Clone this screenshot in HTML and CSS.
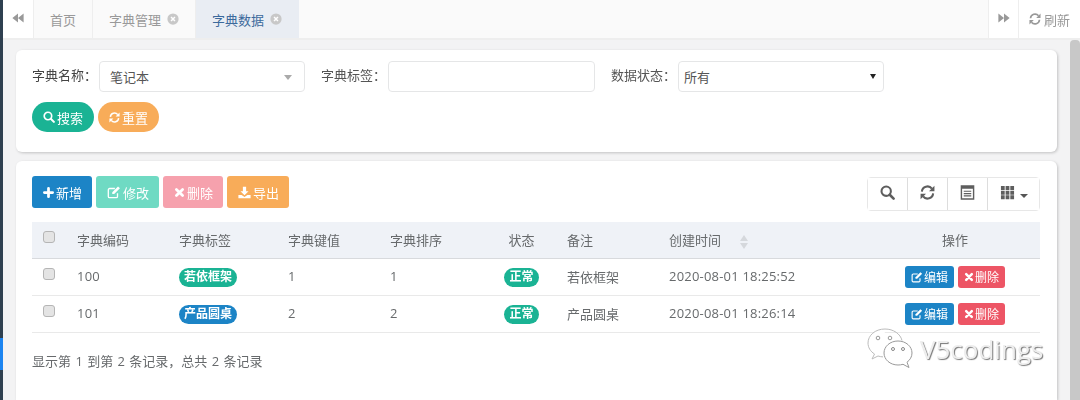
FILE: index.html
```html
<!DOCTYPE html>
<html lang="zh-CN">
  <head>
    <meta charset="UTF-8" />
    <title>字典数据</title>
    <link rel="stylesheet" href="styles.css">
  </head>
  <body>
    <svg class="sprite" width="0" height="0">
      <symbol id="i-search" viewBox="0 0 16 16">
        <circle cx="6.6" cy="6.600" r="5" fill="none" stroke="currentColor" stroke-width="2.2" />
        <path d="M10.400 10.400l4.100 4.100" fill="none" stroke="currentColor" stroke-width="2.8" stroke-linecap="round" />
      </symbol>
      <symbol id="i-refresh" viewBox="0 0 16 16">
        <path d="M2 7A6 6 0 0 1 12.700 3.800M14 9A6 6 0 0 1 3.300 12.200" fill="none" stroke="currentColor" stroke-width="2.2" />
        <path d="M15.400 .8V6.600H9.600zM.6 15.200V9.400H6.400z" fill="currentColor" />
      </symbol>
      <symbol id="i-edit" viewBox="0 0 16 16">
        <path d="M12 9.500V13a1.500 1.500 0 0 1-1.500 1.500H3A1.500 1.500 0 0 1 1.500 13V5.500A1.500 1.500 0 0 1 3 4h6" fill="none" stroke="currentColor" stroke-width="1.5" />
        <path d="M6 8.200L12.600 1.600l2.200 2.200L8.200 10.400H6z" fill="currentColor" />
      </symbol>
      <symbol id="i-times" viewBox="0 0 16 16">
        <path d="M3.500 3.500l9 9M12.500 3.500l-9 9" fill="none" stroke="currentColor" stroke-width="4" stroke-linecap="round" />
      </symbol>
      <symbol id="i-plus" viewBox="0 0 16 16">
        <path d="M8 2v12M2 8h12" fill="none" stroke="currentColor" stroke-width="4" stroke-linecap="round" />
      </symbol>
      <symbol id="i-download" viewBox="0 0 16 16">
        <path d="M6 1h4v5.500h3L8 11.500 3 6.500h3zM.5 11h3.900L8 13.400 11.600 11h3.900v4H.5z" fill="currentColor" />
      </symbol>
      <symbol id="i-back" viewBox="0 0 16 16">
        <path d="M8 2v12L.5 8zM15.500 2v12L8 8z" fill="currentColor" />
      </symbol>
      <symbol id="i-forward" viewBox="0 0 16 16">
        <path d="M.5 2v12L8 8zM8 2v12L15.500 8z" fill="currentColor" />
      </symbol>
      <symbol id="i-close" viewBox="0 0 16 16">
        <circle cx="8" cy="8" r="7.500" fill="currentColor" />
        <path d="M5.400 5.400l5.200 5.200M10.600 5.400l-5.200 5.200" fill="none" stroke="#fff" stroke-width="2" />
      </symbol>
      <symbol id="i-list" viewBox="0 0 16 16">
        <path d="M1.500 1h13v14h-13z" fill="none" stroke="currentColor" stroke-width="1.500" />
        <path d="M1.500 1h13v3h-13zM4 6h8v1.300H4zM4 8.500h8v1.300H4zM4 11h8v1.300H4z" fill="currentColor" />
      </symbol>
      <symbol id="i-th" viewBox="0 0 16 16">
        <path d="M1 1h4v4.300H1zM6 1h4v4.300H6zM11 1h4v4.300h-4zM1 6h4v4.300H1zM6 6h4v4.300H6zM11 6h4v4.300h-4zM1 11h4v4.300H1zM6 11h4v4.300H6zM11 11h4v4.300h-4z" fill="currentColor" />
      </symbol>
    </svg>

    <div class="app">
      <aside class="sidebar"><span class="sidebar-mark"></span></aside>

      <div class="main">
        <nav class="tabs">
          <button class="tab-arrow"><svg class="ico"><use href="#i-back" /></svg></button>
          <a class="tab tab-home">首页</a>
          <a class="tab">字典管理 <svg class="ico-close"><use href="#i-close" /></svg></a>
          <a class="tab active">字典数据 <svg class="ico-close"><use href="#i-close" /></svg></a>
          <span class="tabs-space"></span>
          <button class="tab-arrow"><svg class="ico"><use href="#i-forward" /></svg></button>
          <a class="tab-refresh"><svg class="ico-12"><use href="#i-refresh" /></svg>刷新</a>
        </nav>

        <div class="content">
          <section class="card search-card">
            <div class="search-row">
              <label>字典名称：</label>
              <div class="field field-select2">笔记本<span class="caret caret-light"></span></div>
              <label class="label-next">字典标签：</label>
              <input class="field field-input" type="text">
              <label class="label-next">数据状态：</label>
              <div class="field field-native">所有<span class="caret caret-dark"></span></div>
            </div>
            <div class="search-actions">
              <a class="btn btn-round green"><svg class="ico-12"><use href="#i-search" /></svg>搜索</a>
              <a class="btn btn-round orange"><svg class="ico-11"><use href="#i-refresh" /></svg>重置</a>
            </div>
          </section>

          <section class="card table-card">
            <div class="toolbar">
              <div class="toolbar-left">
                <a class="btn blue"><svg class="ico-11"><use href="#i-plus" /></svg>新增</a>
                <a class="btn mint"><svg class="ico-14"><use href="#i-edit" /></svg>修改</a>
                <a class="btn pink"><svg class="ico-11"><use href="#i-times" /></svg>删除</a>
                <a class="btn orange"><svg class="ico-13"><use href="#i-download" /></svg>导出</a>
              </div>
              <div class="toolbar-right">
                <button><svg class="ico-tool"><use href="#i-search" /></svg></button>
                <button><svg class="ico-tool"><use href="#i-refresh" /></svg></button>
                <button><svg class="ico-tool"><use href="#i-list" /></svg></button>
                <button class="tool-wide"><svg class="ico-tool"><use href="#i-th" /></svg><span class="caret caret-tool"></span></button>
              </div>
            </div>

            <table>
              <colgroup>
                <col class="c-check"><col class="c-code"><col class="c-label"><col class="c-key"><col class="c-sort">
                <col class="c-state"><col class="c-note"><col class="c-time"><col>
              </colgroup>
              <thead>
                <tr>
                  <th><span class="check"></span></th>
                  <th>字典编码</th>
                  <th>字典标签</th>
                  <th>字典键值</th>
                  <th>字典排序</th>
                  <th class="center">状态</th>
                  <th>备注</th>
                  <th>创建时间<span class="sort"></span></th>
                  <th class="center">操作</th>
                </tr>
              </thead>
              <tbody>
                <tr>
                  <td><span class="check"></span></td>
                  <td class="num">100</td>
                  <td><span class="badge green">若依框架</span></td>
                  <td class="num">1</td>
                  <td class="num">1</td>
                  <td class="center"><span class="badge green">正常</span></td>
                  <td>若依框架</td>
                  <td class="num">2020-08-01 18:25:52</td>
                  <td>
                    <div class="ops">
                      <a class="btn-xs blue"><svg class="ico-12"><use href="#i-edit" /></svg>编辑</a>
                      <a class="btn-xs red"><svg class="ico-10"><use href="#i-times" /></svg>删除</a>
                    </div>
                  </td>
                </tr>
                <tr>
                  <td><span class="check"></span></td>
                  <td class="num">101</td>
                  <td><span class="badge blue">产品圆桌</span></td>
                  <td class="num">2</td>
                  <td class="num">2</td>
                  <td class="center"><span class="badge green">正常</span></td>
                  <td>产品圆桌</td>
                  <td class="num">2020-08-01 18:26:14</td>
                  <td>
                    <div class="ops">
                      <a class="btn-xs blue"><svg class="ico-12"><use href="#i-edit" /></svg>编辑</a>
                      <a class="btn-xs red"><svg class="ico-10"><use href="#i-times" /></svg>删除</a>
                    </div>
                  </td>
                </tr>
              </tbody>
            </table>

            <p class="pager">显示第 1 到第 2 条记录，总共 2 条记录</p>
          </section>
        </div>
      </div>

      <div class="scroll-track"><span class="scroll-thumb"></span></div>
    </div>

    <!-- watermark sits over the page -->
    <div class="watermark">
      <svg class="wm-logo" viewBox="0 0 48 44">
        <path d="M19 2C9 2 2 8.500 2 16c0 4.600 2.500 8.500 6.500 11L6 32l6-3c1.500 .5 3 .8 5 .9" fill="#fff" stroke="#bbb" stroke-width="1" />
        <path d="M19 2c8.500 0 15.500 5 17 11.500" fill="none" stroke="#bbb" stroke-width="1" />
        <circle cx="12" cy="11" r="1.800" fill="#fff" stroke="#999" />
        <circle cx="24" cy="11" r="1.800" fill="#fff" stroke="#999" />
        <path d="M32 14c8 0 14 5.500 14 12 0 3.800-2 7-5 9.200l2 5.300-6-3.200c-1.600 .5-3.200 .7-5 .7-8 0-14-5.500-14-12s6-12 14-12z" fill="#fff" stroke="#999" stroke-width="1" />
        <circle cx="27" cy="22" r="1.500" fill="#fff" stroke="#888" />
        <circle cx="37" cy="22" r="1.500" fill="#fff" stroke="#888" />
      </svg>
      <span class="wm-text">V5codings</span>
    </div>
  </body>
</html>
```

FILE: styles.css
```css
* {
  box-sizing: border-box;
}

html,
body {
  margin: 0;
  height: 400px;
  overflow: hidden;
}

body {
  position: relative;
  font-family: "Open Sans", "Noto Sans CJK SC", sans-serif;
  font-size: 13px;
  color: #676a6c;
  background-color: #f3f3f4;
}

.sprite {
  position: absolute;
}

.app {
  display: flex;
  height: 400px;
  filter: blur(0.35px);
}

.sidebar {
  flex: 0 0 3px;
  padding-top: 338px;
  background-color: #2f4050;
}

.sidebar-mark {
  display: block;
  height: 32px;
  background-color: #1c84f0;
}

.main {
  flex: 1;
  min-width: 0;
  display: flex;
  flex-direction: column;
}

/* tabs */
.tabs {
  display: flex;
  height: 40px;
  background-color: #fafafa;
  border-bottom: 2px solid #eeeeee;
}

.tab-arrow {
  flex: 0 0 31px;
  padding: 0;
  border: 0;
  border-right: 1px solid #eeeeee;
  background-color: #fff;
  color: #999;
}

.tabs-space {
  flex: 1;
}

.tabs .tab-arrow:nth-last-child(2) {
  flex-basis: 30px;
  border-left: 1px solid #eeeeee;
  border-right: 0;
}

.tab {
  display: flex;
  align-items: center;
  gap: 6px;
  width: 103px;
  padding-left: 16px;
  border-right: 1px solid #eeeeee;
  color: #999;
}

.tab-home {
  width: 59px;
}

.tab.active {
  background-color: #e9edf3;
  color: #3c6a9c;
  border-right: 0;
}

.tab-refresh {
  flex: 0 0 62px;
  display: flex;
  align-items: center;
  gap: 3px;
  padding-left: 10px;
  border-left: 1px solid #eeeeee;
  background-color: #fff;
  color: #999;
}

.ico {
  width: 12px;
  height: 12px;
}

.ico-close {
  width: 12px;
  height: 12px;
  color: #c8c8c8;
}

.ico-10,
.ico-11,
.ico-12,
.ico-13,
.ico-14 {
  flex: none;
}

.ico-10 {
  width: 10px;
  height: 10px;
}

.ico-11 {
  width: 11px;
  height: 11px;
}

.ico-12 {
  width: 12px;
  height: 12px;
}

.ico-13 {
  width: 13px;
  height: 13px;
}

.ico-14 {
  width: 14px;
  height: 14px;
}

.ico-tool {
  width: 15px;
  height: 15px;
}

/* cards */
.content {
  flex: 1;
  min-height: 0;
  display: flex;
  flex-direction: column;
  gap: 9px;
  padding: 10px 0 0 13px;
  width: 1054px;
}

.card {
  background-color: #fff;
  border-radius: 6px;
  box-shadow: 1px 1px 3px rgba(0, 0, 0, 0.2);
}

.search-card {
  height: 102px;
  padding: 11px 16px 0;
}

.search-row {
  display: flex;
  align-items: center;
  height: 31px;
}

.search-row label {
  width: 67px;
  color: #444;
  padding-bottom: 5px;
}

.search-row .label-next {
  width: 83px;
  padding-left: 16px;
  color: #555;
}

.field {
  position: relative;
  display: flex;
  align-items: center;
  width: 206px;
  height: 31px;
  padding: 0 10px;
  border: 1px solid #e5e6e7;
  border-radius: 4px;
  background-color: #fff;
  font: inherit;
  color: #555;
}

.field-input {
  width: 207px;
}

.field-native {
  padding-left: 5px;
}

.caret {
  position: absolute;
  width: 0;
  height: 0;
  border-style: solid;
  border-width: 4px 4px 0;
  border-color: #aaa transparent transparent;
}

.caret-light {
  right: 12px;
  top: 13px;
  border-width: 5px 4px 0;
}

.caret-dark {
  right: 7px;
  top: 12px;
  border-width: 5px 3px 0;
  border-top-color: #222;
}

.caret-tool {
  position: static;
  display: inline-block;
  margin-left: 5px;
  vertical-align: middle;
  border-top-color: #555;
}

.btn {
  display: inline-flex;
  align-items: center;
  gap: 2px;
  height: 32px;
  padding: 0 10px 0 11px;
  border-radius: 3px;
  color: #fff;
}

.btn-round {
  height: 30px;
  padding: 0 11px;
  border-radius: 15px;
}

.search-actions {
  display: flex;
  gap: 4px;
  margin-top: 10px;
}

.green {
  background-color: #1ab394;
}

.orange {
  background-color: #f8ac59;
}

.blue {
  background-color: #1c84c6;
}

.mint {
  background-color: #6fdac3;
}

.pink {
  background-color: #f6a1ad;
}

.red {
  background-color: #ed5565;
}

/* table */
.table-card {
  flex: 1;
  padding: 15px 17px 0 16px;
  border-radius: 6px 6px 0 0;
}

.toolbar {
  display: flex;
  justify-content: space-between;
  height: 46px;
}

.toolbar-left {
  display: flex;
  gap: 4px;
  height: 32px;
}

.toolbar-right {
  display: flex;
  height: 34px;
  margin-top: 1px;
  border: 1px solid #e7e7e7;
  border-radius: 4px;
}

.toolbar-right button {
  width: 40px;
  padding: 0;
  border: 0;
  border-right: 1px solid #dddddd;
  background-color: #fff;
  color: #5e5e5e;
}

.toolbar-right .tool-wide {
  width: 51px;
  border-right: 0;
}

table {
  width: 100%;
  table-layout: fixed;
  border-collapse: collapse;
}

.c-check {
  width: 37px;
}

.c-code,
.c-key,
.c-sort,
.c-note {
  width: 102px;
}

.c-label {
  width: 109px;
}

.c-state {
  width: 75px;
}

.c-time {
  width: 209px;
}

th,
td {
  padding: 0 8px;
  text-align: left;
  font-weight: 400;
}

th {
  height: 36px;
  background-color: #eff2f7;
  border-bottom: 1px solid #d8dadd;
}

td {
  height: 37px;
  border-bottom: 1px solid #e9e9e9;
}

td.num {
  padding-bottom: 2px;
  letter-spacing: 0.2px;
}

th.center,
td.center {
  text-align: center;
}

.check {
  display: block;
  width: 12px;
  height: 12px;
  margin: 0 0 5px 3px;
  border: 1px solid #b5b5b5;
  border-radius: 3px;
  background-color: #e4e4e4;
}

.sort {
  position: relative;
  display: inline-block;
  width: 8px;
  height: 14px;
  margin-left: 19px;
  vertical-align: middle;
}

.sort::before,
.sort::after {
  content: "";
  position: absolute;
  left: 0;
  border-left: 4px solid transparent;
  border-right: 4px solid transparent;
}

.sort::before {
  top: 0;
  border-bottom: 6px solid #d5d8dc;
}

.sort::after {
  bottom: 0;
  border-top: 6px solid #d5d8dc;
}

.badge {
  display: inline-block;
  height: 19px;
  padding: 0 5px;
  border-radius: 10px;
  color: #fff;
  font-size: 12px;
  font-weight: 700;
  line-height: 18px;
  vertical-align: middle;
}

.ops {
  display: flex;
  justify-content: center;
  gap: 4px;
}

.btn-xs {
  display: inline-flex;
  align-items: center;
  height: 22px;
  padding: 0 6px;
  gap: 1px;
  border-radius: 3px;
  color: #fff;
  font-size: 12px;
}

.pager {
  margin: 19px 0 0;
  line-height: 18px;
  word-spacing: 1px;
}

.scroll-track {
  position: absolute;
  top: 40px;
  right: 0;
  width: 10px;
}

.scroll-thumb {
  display: block;
  height: 360px;
  background-color: #c8c8c8;
  border-radius: 4px 4px 0 0;
}

/* watermark */
.watermark {
  position: absolute;
  left: 866px;
  top: 327px;
  display: flex;
  align-items: center;
  gap: 6px;
}

.wm-logo {
  width: 48px;
  height: 44px;
}

.wm-text {
  font-family: "Open Sans", sans-serif;
  font-size: 26px;
  color: #eeeeee;
  text-shadow: 1px 1px 1px #777;
}
```
